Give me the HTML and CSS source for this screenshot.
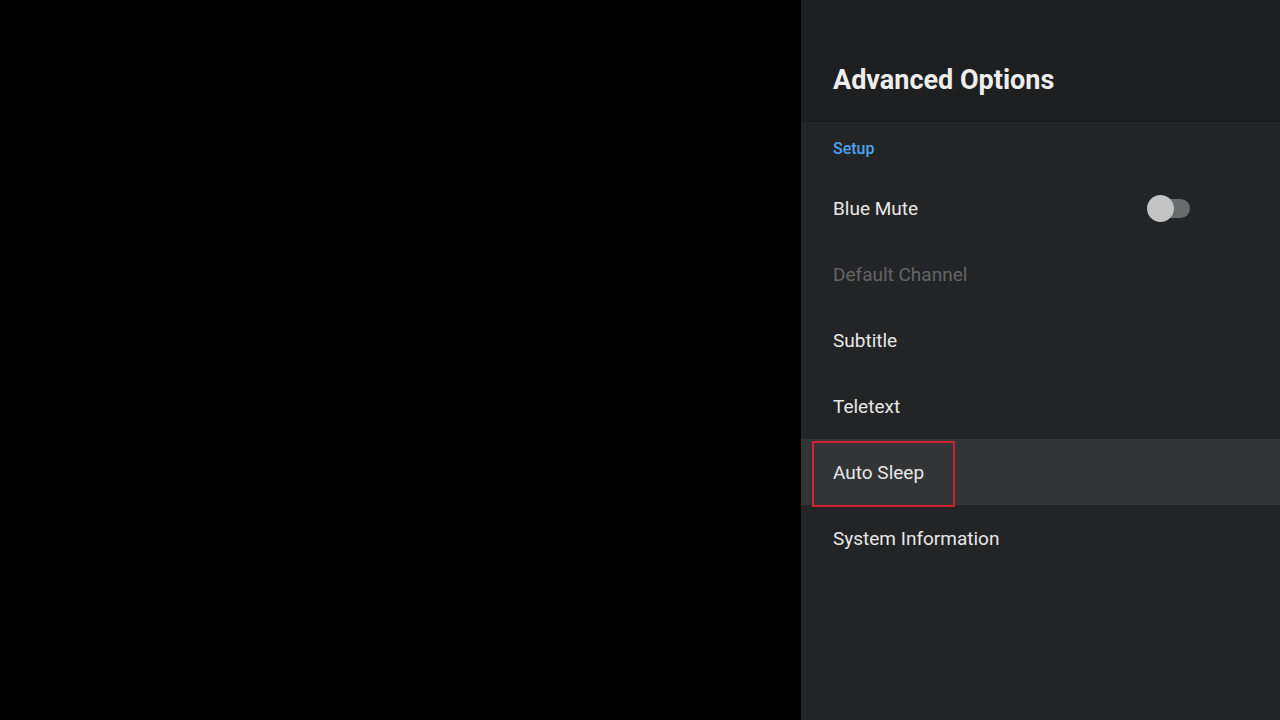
FILE: index.html
```html
<!DOCTYPE html>
<html>
<head>
<meta charset="utf-8">
<link rel="stylesheet" href="styles.css">
</head>
<body>
<div class="screen">
  <div class="stage"></div>
  <aside class="panel">
    <header class="panel-header">
      <h1 class="panel-title">Advanced Options</h1>
    </header>
    <div class="panel-body">
      <div class="section-label">Setup</div>
      <ul class="menu">
        <li class="menu-item">
          <span class="item-label">Blue Mute</span>
          <span class="toggle"><span class="toggle-thumb"></span></span>
        </li>
        <li class="menu-item is-disabled"><span class="item-label">Default Channel</span></li>
        <li class="menu-item"><span class="item-label">Subtitle</span></li>
        <li class="menu-item"><span class="item-label">Teletext</span></li>
        <li class="menu-item is-active"><span class="item-label">Auto Sleep</span><span class="focus-ring"></span></li>
        <li class="menu-item"><span class="item-label">System Information</span></li>
      </ul>
    </div>
  </aside>
</div>
</body>
</html>
```
FILE: styles.css
```css
* { box-sizing: border-box; }
html, body {
  margin: 0;
  padding: 0;
  background: #000;
}
.screen {
  width: 1280px;
  height: 720px;
  display: flex;
  font-family: Roboto, "Noto Sans", sans-serif;
  overflow: hidden;
}
.stage {
  width: 801px;
  flex: none;
  background: #000;
}
.panel {
  flex: 1;
  display: flex;
  flex-direction: column;
  background: #232426;
}
.panel-header {
  height: 122px;
  flex: none;
  background: #1e1f21;
  border-bottom: 1px solid #1a1b1c;
  padding: 62px 0 0 32px;
}
.panel-title {
  margin: 0;
  font-size: 27px;
  font-weight: 700;
  color: #eeeeee;
  line-height: 36px;
  letter-spacing: 0;
}
.panel-body {
  flex: 1;
  padding-top: 17px;
}
.section-label {
  padding-left: 32px;
  font-size: 16px;
  font-weight: 500;
  color: #4ea3f2;
  line-height: 20px;
  height: 36px;
}
.menu {
  list-style: none;
  margin: 0;
  padding: 0;
}
.menu-item {
  position: relative;
  height: 66px;
  display: flex;
  align-items: center;
  justify-content: space-between;
  padding: 0 90px 0 32px;
  font-size: 19px;
  color: #e8e8e8;
}
.menu-item.is-disabled { color: #636466; }
.menu-item.is-active { background: #333436; }
.focus-ring {
  position: absolute;
  left: 11px;
  top: 2px;
  width: 143px;
  height: 66px;
  border: 2px solid #cf2430;
}
.toggle {
  position: relative;
  width: 42px;
  height: 19px;
  border-radius: 10px;
  background: #6a6b6d;
}
.toggle-thumb {
  position: absolute;
  left: -1px;
  top: -4px;
  width: 27px;
  height: 27px;
  border-radius: 50%;
  background: #c3c3c3;
}
```
